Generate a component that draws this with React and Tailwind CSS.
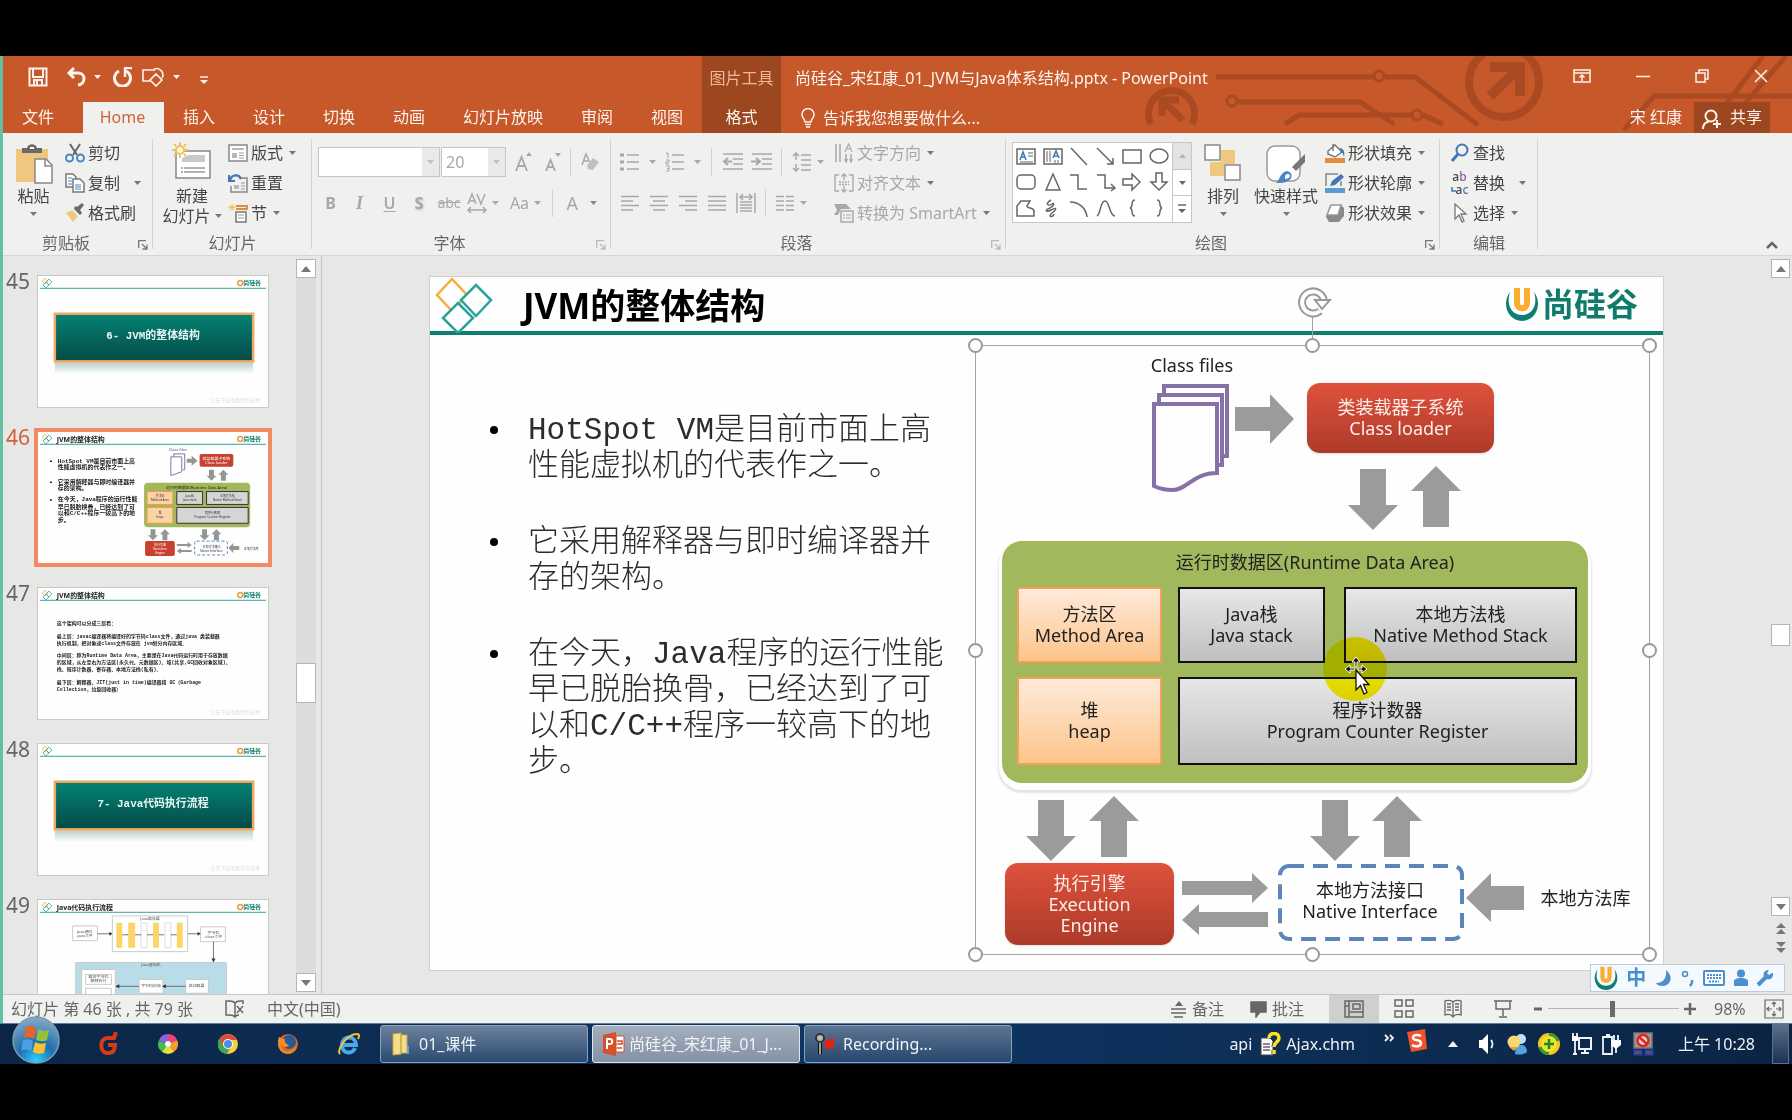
import React from "react";

const UI = "font-['Noto_Sans','Noto_Sans_CJK_SC',sans-serif]";

function Svg({ w = 20, h = 20, vb, className = "", children }) {
  return (
    <svg
      width={w}
      height={h}
      viewBox={vb || `0 0 ${w} ${h}`}
      fill="none"
      stroke="currentColor"
      strokeWidth="1.5"
      aria-hidden="true"
      className={"shrink-0 " + className}
    >
      {children}
    </svg>
  );
}

const Caret = ({ className = "" }) => (
  <Svg w={7} h={4} className={className}>
    <path d="M0 0h7L3.500 4z" fill="currentColor" stroke="none" />
  </Svg>
);

const Sep = ({ className = "" }) => <span className={"h-7 w-px shrink-0 bg-[#d2d3d1] " + className} />;

const Launcher = ({ className = "" }) => (
  <button type="button" aria-label="更多选项" className={"absolute right-[5px] bottom-[5px] " + className}>
    <Svg w={10} h={10}>
      <path d="M.7 8V.7H8M4 4l5 5M9 4.500v4.500H4.500" strokeWidth="1.300" />
    </Svg>
  </button>
);

/* ---------- brand drawings ---------- */

const ULogo = ({ w, h }) => (
  <Svg w={w} h={h} vb="0 0 34 34">
    <path d="M5 5C-4 17 3 34 17 34S38 17 29 5C33 17 28 28 17 28S1 17 5 5z" fill="#0e7f70" stroke="none" />
    <path d="M12 1v15c0 7 10 7 10 0V1" stroke="#fbae2f" strokeWidth="6" />
  </Svg>
);

const Diamonds = () => (
  <Svg w={58} h={56} className="self-start">
    <g strokeWidth="2.500">
      <path d="M17 2l15 16-15 16L2 18z" stroke="#f5ae3c" />
      <path d="M41 8l15 15-15 16-15-16z" stroke="#2aa39a" fill="#fefefe" />
      <path d="M23 26l15 15-15 15L8 41z" stroke="#2aa39a" fill="#fefefe" />
    </g>
  </Svg>
);

/* ---------- header ---------- */

function Circuit() {
  return (
    <svg
      className="pointer-events-none absolute right-0 top-0 h-[77px] w-[656px]"
      viewBox="1136 56 656 77"
      fill="none"
      stroke="#a94a22"
      strokeWidth="5"
      aria-hidden="true"
    >
      <path d="M1151 124a23 23 0 1 1 41 0" strokeWidth="7" />
      <path d="M1183 120l-18-17M1162 116v-16h17" strokeWidth="7" />
      <path d="M1216 77h157M1385 77h30l63 48" />
      <circle cx="1379" cy="76" r="5" strokeWidth="3" />
      <circle cx="1232" cy="101" r="5" strokeWidth="3" />
      <path d="M1238 102h122l34 22" />
      <path d="M1285 124l14-9h112M1423 115l20 9" />
      <circle cx="1417" cy="115" r="5" strokeWidth="3" />
      <circle cx="1504" cy="82" r="35" strokeWidth="8" />
      <path d="M1490 96l28-27M1490 67h30v29" strokeWidth="10" />
      <path d="M1624 130l30-34h138M1727 103l36-47M1742 107l44-51" />
    </svg>
  );
}

function QuickAccess() {
  return (
    <div className="flex h-[46px] items-center pb-1 pl-[25px] text-[#fdf3ee]">
      <button type="button" aria-label="保存">
        <Svg w={20} h={20}>
          <path d="M1.500 1.500h17v17h-17zM5 2v8h10V2M6 18v-5h8v5M9 14v4" strokeWidth="2" />
        </Svg>
      </button>
      <button type="button" aria-label="撤消" className="ml-[18px] flex items-center gap-[8px]">
        <Svg w={20} h={20}>
          <path d="M8 1L3 6l5 5M3 6h9c8 0 8 11 0 12" strokeWidth="3" />
        </Svg>
        <Caret />
      </button>
      <button type="button" aria-label="重复" className="ml-[12px]">
        <Svg w={20} h={20}>
          <path d="M6 4a8 8 0 1 0 7 0" strokeWidth="3" />
          <path d="M11 1h8M12 1v9" strokeWidth="2.500" />
        </Svg>
      </button>
      <button type="button" aria-label="形状" className="ml-[9px] flex items-center gap-[7px]">
        <Svg w={24} h={20}>
          <path d="M9 14H1V3h12M12 2c6-2 11 4 8 9M14 7l6 6-6 6-6-6z" strokeWidth="1.600" />
        </Svg>
        <Caret />
      </button>
      <button type="button" aria-label="自定义快速访问工具栏" className="ml-[20px] mt-1.5">
        <Svg w={8} h={9}>
          <path d="M0 1h8" />
          <path d="M0 4h8L4 8z" fill="currentColor" stroke="none" />
        </Svg>
      </button>
    </div>
  );
}

const TABS = ["插入", "设计", "切换", "动画", "幻灯片放映", "审阅", "视图"];

function Header() {
  return (
    <header className="relative flex h-[77px] shrink-0 bg-[#c75829] text-base leading-5 text-[#fdf3ee]">
      <Circuit />
      <div className="relative flex flex-col">
        <QuickAccess />
        <nav className="flex h-[31px]">
          <button type="button" className="w-20 pb-0.5 pr-2.5">文件</button>
          <button type="button" className="w-[81px] bg-[#f0f1ef] pb-0.5 pr-0.5 text-[#d0603a]">Home</button>
          {TABS.map((t) => (
            <button type="button" key={t} className="px-[19px] pb-0.5">{t}</button>
          ))}
        </nav>
      </div>
      <div className="relative flex w-[79px] flex-col bg-[#9c471f]">
        <div className="flex h-[46px] items-center justify-center pb-0.5 text-[#f2b798]">图片工具</div>
        <button type="button" className="h-[31px] pb-0.5">格式</button>
      </div>
      <div className="relative flex flex-1 flex-col pl-3.5">
        <div className="flex h-[46px] items-center pb-0.5">
          <h1 className="flex-1 whitespace-nowrap">尚硅谷_宋红康_01_JVM与Java体系结构.pptx - PowerPoint</h1>
          <div className="flex gap-[41px] pb-1 pr-6">
            <button type="button" aria-label="功能区显示选项">
              <Svg w={18} h={14}><path d="M1 1h16v12H1zM1 4h16M9 12V6M6.500 8.500L9 6l2.500 2.500" /></Svg>
            </button>
            <button type="button" aria-label="最小化" className="ml-1">
              <Svg w={14} h={14}><path d="M0 7.500h14" /></Svg>
            </button>
            <button type="button" aria-label="还原" className="ml-1">
              <Svg w={14} h={14}><path d="M1 4h9v9H1zM4 4V1h9v9h-3" /></Svg>
            </button>
            <button type="button" aria-label="关闭" className="ml-1">
              <Svg w={14} h={14}><path d="M1 1l12 12M13 1L1 13" /></Svg>
            </button>
          </div>
        </div>
        <div className="flex h-[31px] items-center">
          <button type="button" className="flex flex-1 items-center gap-2 pl-1.5">
            <Svg w={14} h={20}>
              <path d="M4 14c0-3-3-4-3-7.500a6 6 0 0 1 12 0C13 10 10 11 10 14zM4 16.500h6M5 19h4" />
            </Svg>
            告诉我您想要做什么...
          </button>
          <span className="mr-3 pb-0.5">宋 红康</span>
          <button type="button" className="mr-[22px] flex h-full items-center gap-2 bg-[#9c471f] px-2 pb-0.5">
            <Svg w={20} h={20} className="mt-1">
              <circle cx="9" cy="7" r="5.500" strokeWidth="2" />
              <path d="M1 20c0-5 3-7 6-7.500M15 11v8M11 15h8" strokeWidth="2" />
            </Svg>
            共享
          </button>
        </div>
      </div>
    </header>
  );
}

/* ---------- ribbon ---------- */

function Group({ label, width, labelPad = "pr-6", launcher, dim, children }) {
  return (
    <section className={"relative flex shrink-0 flex-col pt-[5px] " + width}>
      <span className="absolute bottom-1.5 right-0 top-1.5 w-px bg-[#d2d3d1]" />
      <div className="flex h-[90px]">{children}</div>
      <div className={"flex flex-1 items-center justify-center pt-0.5 text-[#666] " + labelPad}>{label}</div>
      {launcher && <Launcher className={dim ? "text-[#b9bab8]" : "text-[#777]"} />}
    </section>
  );
}

const Row = ({ icon, children, caret, gap = "" }) => (
  <button type="button" className="flex h-[30px] items-center gap-[3px] whitespace-nowrap">
    <span className="flex w-[21px] justify-center">{icon}</span>
    {children}
    {caret && <Caret className={"ml-[3px] text-[#777] " + gap} />}
  </button>
);

const ic = {
  cut: (
    <Svg><path d="M5 1l7 11M15 1L8 12" stroke="#666" strokeWidth="2" /><circle cx="4.500" cy="15" r="3.500" stroke="#4a86c5" strokeWidth="2" /><circle cx="15.500" cy="15" r="3.500" stroke="#4a86c5" strokeWidth="2" /></Svg>
  ),
  copy: (
    <Svg><g stroke="#777"><path d="M1 1h7l3 3v10H1z" fill="#fff" /><path d="M8 6h7l4 4v9H8z" fill="#fff" /></g><path d="M3 5h4M3 8h4M3 11h4M10 12h6M10 14h6M10 16h6" stroke="#4a86c5" strokeWidth="1" /></Svg>
  ),
  brush: (
    <Svg><path d="M1 10l6-3 6 6-5 6z" fill="#f0c77e" stroke="none" /><path d="M9 6l6 6 2-2-2-3 4-5-2-2-5 4-2-1z" fill="#6a6a6a" stroke="none" /></Svg>
  ),
  layout: (
    <Svg><path d="M1 2h18v16H1z" stroke="#888" fill="#fff" /><path d="M4 5h12v2H4zM4 10h5v5H4z" fill="#b9bab8" stroke="none" /><path d="M11 10h5M11 12.500h5M11 15h5" stroke="#999" strokeWidth="1" /></Svg>
  ),
  reset: (
    <Svg><path d="M11 5h8v14H3v-6" stroke="#888" /><path d="M6 12h5v4H6z" fill="#b9bab8" stroke="none" /><path d="M13 10h4M13 13h4M13 16h4" stroke="#999" strokeWidth="1" /><path d="M1 2v6h6M2 7c2-6 9-6 11-1" stroke="#3f77b8" strokeWidth="2.200" /></Svg>
  ),
  section: (
    <Svg><path d="M8 3h11v3H8" stroke="#e08a3c" strokeWidth="1.800" /><path d="M8 9h10v10H8z" stroke="#777" fill="#fff" /><path d="M10 12h6M10 15h6" stroke="#999" strokeWidth="1" /><path d="M4 1v7M.5 4.500h7M1.500 2l5 5M6.500 2l-5 5" stroke="#f0c060" strokeWidth="1" /></Svg>
  ),
  textDir: <Svg><path d="M2 1v18M6 1v18M12 11v8M17 11v8" /><path d="M11 9l3.500-8L18 9M12.500 6h4M10.500 16l1.500 3 1.500-3M15.500 16l1.500 3 1.500-3" strokeWidth="1.200" /></Svg>,
  alignText: <Svg><path d="M5 2H1v16h4M15 2h4v16h-4M10 1v6M10 19v-6M7.500 3.500L10 1l2.500 2.500M7.500 16.500L10 19l2.500-2.500" strokeWidth="1.300" /><path d="M5 9h10M5 11.500h10" strokeDasharray="2 1" /></Svg>,
  smart: <Svg><path d="M0 1h12l5 5H7l-3 6H0l3-5z" fill="currentColor" stroke="none" /><path d="M7 8h12v11H7z" fill="#f0f1ef" /><path d="M9 12h2M12 12h5M9 15h2M12 15h5" strokeWidth="1.200" /></Svg>,
  fill: (
    <Svg><path d="M3 8l7-6 7 7-7 5-7-3z" fill="#fff" stroke="#777" /><path d="M8 8V1" stroke="#777" /><path d="M15 5c4 1 5 4 4 9-1-4-2-5-4-6z" fill="#3f77b8" stroke="none" /><path d="M0 15h20v5H0z" fill="#ea8b3b" stroke="none" /></Svg>
  ),
  outline: (
    <Svg><path d="M13 1H1v12M16 8v5" stroke="#888" /><path d="M5 13l2-5 9-7 3 3-9 8z" fill="#3f77b8" stroke="none" /><path d="M0 15h20v5H0z" fill="#5b9bd5" stroke="none" /></Svg>
  ),
  effect: (
    <Svg><path d="M5 2h11l3 3v8l-5 6H4l-3-5z" fill="#8a8a8a" stroke="none" /><path d="M6 2h10l-3 10H2z" fill="#fff" stroke="#999" /></Svg>
  ),
  find: <Svg><circle cx="12" cy="7" r="5.500" stroke="#3f77b8" strokeWidth="2" /><path d="M8 11l-6 7" stroke="#3f77b8" strokeWidth="3" /></Svg>,
  select: <Svg><path d="M5 1v15l4-4 3 7 2-1-3-7h5z" fill="#fff" stroke="#777" strokeWidth="1.300" /></Svg>,
};

const Replace = () => (
  <span className="flex flex-col text-xs font-medium leading-[13px]">
    <span>a<span className="text-[#8d56ad]">b</span></span>
    <span className="flex items-center"><Svg w={5} h={6}><path d="M1 0v4h4" stroke="#3f77b8" /></Svg>a<span className="text-[#3f77b8]">c</span></span>
  </span>
);

const lines = (rows) => (
  <Svg>
    {rows.map(([a, b], i) => (
      <path key={i} d={`M${a} ${3.5 + i * 4.5}H${b}`} />
    ))}
  </Svg>
);

const SHAPES = [
  <g key="0"><path d="M1 3h18v15H1z" /><path d="M4 14L7 6l3 8M5 11h4" stroke="#3f77b8" /><path d="M12 7h5M12 10h5M4 16h13" strokeWidth="1" /></g>,
  <g key="1"><path d="M1 3h18v15H1z" /><path d="M10 12l3-7 3 7M11 10h4" stroke="#3f77b8" /><path d="M4 5v11M7 5v11M12 14v3M15 14v3" strokeWidth="1" /></g>,
  <path key="2" d="M2 2l16 17" />,
  <path key="3" d="M1 2l16 16M17 12v6h-6" />,
  <path key="4" d="M1 4h18v13H1z" />,
  <ellipse key="5" cx="10" cy="10" rx="9" ry="7" />,
  <rect key="6" x="1" y="3" width="18" height="14" rx="4" />,
  <path key="7" d="M10 2l7 16H3z" />,
  <path key="8" d="M1 3h8v14h9" />,
  <path key="9" d="M1 3h8v13h9M15 12l4 4-4 3" />,
  <path key="10" d="M1 7h9V2l8 8-8 8v-5H1z" />,
  <path key="11" d="M7 1h6v9h5l-8 8-8-8h5z" />,
  <path key="12" d="M1 17V7l4-5h9l-3 5c0 3 7 1 7 5v5z" />,
  <path key="13" d="M8 1C0 6 7 7 9 5s3 2-2 4-5 5 1 2 6-1 1 3 1 5 2 1" />,
  <path key="14" d="M1 3c9 0 16 6 17 15" />,
  <path key="15" d="M1 17C5 15 4 2 9 2s4 15 10 15" />,
  <path key="16" d="M13 1c-5 0-1 7-5 8 4 1 0 8 5 8" />,
  <path key="17" d="M8 1c5 0 1 7 5 8-4 1 0 8-5 8" />,
];

function Ribbon() {
  return (
    <div className="flex h-[123px] shrink-0 border-b border-[#d6d7d5] bg-[#f0f1ef] text-base leading-5 text-[#444]">
      <Group label="剪贴板" width="w-[150px]" launcher>
        <button type="button" className="flex w-[61px] flex-col items-center pt-1.5">
          <Svg w={38} h={40}>
            <path d="M1 5h32v33H1z" fill="#f0c77e" stroke="none" />
            <path d="M7 9V4h5c1-5 9-5 10 0h5v5z" fill="#6a6a6a" stroke="none" />
            <path d="M15 3h4v2h-4z" fill="#fff" stroke="none" />
            <path d="M20 15h11l6 6v18H20z" fill="#fff" stroke="#888" />
            <path d="M30 15v7h7" stroke="#888" />
          </Svg>
          <span className="mt-0.5">粘贴</span>
          <Caret className="mt-1.5 text-[#777]" />
        </button>
        <div className="flex flex-col">
          <Row icon={ic.cut}>剪切</Row>
          <Row icon={ic.copy} caret gap="pl-2 w-[15px]">复制</Row>
          <Row icon={ic.brush}>格式刷</Row>
        </div>
      </Group>

      <Group label="幻灯片" width="w-[159px]" labelPad="pr-0">
        <button type="button" className="flex w-[74px] flex-col items-center pl-1 pt-1">
          <Svg w={40} h={38}>
            <path d="M4 9h34v27H4z" fill="#fff" stroke="#888" />
            <path d="M17 13h16v7H10v-4z" fill="#c9cac8" stroke="none" />
            <path d="M9 26h24M9 30h24" stroke="#999" strokeDasharray="2 1 30 0" />
            <circle cx="8" cy="8" r="4" fill="#fff3d0" stroke="#f0c060" strokeWidth="2" />
            <path d="M8 0v3M8 13v3M0 8h3M13 8h3M2 2l2 2M12 12l2 2M2 14l2-2M12 4l2-2" stroke="#f0c060" strokeWidth="1.800" />
          </Svg>
          <span className="mt-1.5">新建</span>
          <span className="flex items-center gap-1 whitespace-nowrap">幻灯片<Caret className="text-[#777]" /></span>
        </button>
        <div className="flex flex-col">
          <Row icon={ic.layout} caret>版式</Row>
          <Row icon={ic.reset}>重置</Row>
          <Row icon={ic.section} caret>节</Row>
        </div>
      </Group>

      <Group label="字体" width="w-[299px]" launcher dim>
        <div className="flex flex-col gap-[9px] pl-1.5 pt-2 text-[#a8a9a7]">
          <div className="flex h-8 items-center">
            <label className="flex h-[30px] w-[122px] border border-[#c6c7c5] bg-white">
              <input aria-label="字体" className="w-0 flex-1 px-1 outline-none" />
              <span className="flex w-[17px] items-center justify-center bg-[#e9eae8]"><Caret className="text-[#c0c1bf]" /></span>
            </label>
            <label className="ml-px flex h-[30px] w-[65px] border border-[#c6c7c5] bg-white">
              <input aria-label="字号" defaultValue="20" className="w-0 flex-1 pl-1 outline-none" />
              <span className="flex w-[17px] items-center justify-center bg-[#e9eae8]"><Caret className="text-[#c0c1bf]" /></span>
            </label>
            <button type="button" aria-label="增大字号" className="ml-1 flex w-[27px] justify-center">
              <Svg w={18} h={20}><path d="M1 19L6.500 5 12 19M3 14h7" strokeWidth="1.800" /><path d="M11 4h6l-3-4z" fill="currentColor" stroke="none" /></Svg>
            </button>
            <button type="button" aria-label="减小字号" className="flex w-[31px] justify-center">
              <Svg w={18} h={20}><path d="M2 19L6.500 8 11 19M4 15h5" strokeWidth="1.800" /><path d="M11 1h6l-3 4z" fill="currentColor" stroke="none" /></Svg>
            </button>
            <Sep className="mx-0.5" />
            <button type="button" aria-label="清除格式" className="flex w-[34px] justify-center">
              <Svg><path d="M2 13L6 2l4 9M3 9h5" /><path d="M7 13l6-7 6 4-6 8-5-1z" fill="#c0c1bf" stroke="none" /></Svg>
            </button>
          </div>
          <div className="flex h-8 items-center">
            <button type="button" className="w-[25px] font-bold">B</button>
            <button type="button" className="w-[33px] font-['Liberation_Serif',serif] text-lg font-bold italic">I</button>
            <button type="button" className="w-[27px] font-semibold underline underline-offset-2">U</button>
            <button type="button" className="w-[32px] font-bold [text-shadow:1px_1px_2px_#bbb]">S</button>
            <button type="button" className="w-[28px] text-sm line-through">abc</button>
            <button type="button" aria-label="字符间距" className="flex w-[40px] items-center justify-center gap-[5px]">
              <Svg w={20} h={22}><path d="M1 12L5 2l4 10M2.500 9h5M10 2l4 10 4-10M1 18h18M4 15l-3 3 3 3M16 15l3 3-3 3" /></Svg><Caret />
            </button>
            <button type="button" className="flex w-[45px] items-center justify-center gap-[5px]">Aa<Caret /></button>
            <Sep className="mx-1" />
            <button type="button" className="flex w-[40px] items-center justify-end gap-3 text-lg"><span>A</span><Caret className="text-[#888]" /></button>
          </div>
        </div>
      </Group>

      <Group label="段落" width="w-[395px]" launcher dim>
        <div className="flex w-[222px] shrink-0 flex-col gap-[9px] pl-[9px] pt-2 text-[#a8a9a7]">
          <div className="flex h-8 items-center">
            <button type="button" aria-label="项目符号" className="flex items-center gap-[9px]">
              <Svg><path d="M0 3h4M0 10h4M0 17h4" strokeWidth="3" /><path d="M7 3h12M7 10h12M7 17h12" /></Svg><Caret />
            </button>
            <button type="button" aria-label="编号" className="ml-[9px] flex items-center gap-[9px]">
              <Svg><path d="M1 1h2v5M1 8h3v2H1v2h3M1 14h3v5H1M2 16.500h2" strokeWidth="1" /><path d="M7 3h12M7 10h12M7 17h12" /></Svg><Caret />
            </button>
            <Sep className="mx-[10px]" />
            <button type="button" aria-label="减少缩进"><Svg w={22}><path d="M1 2h20M11 7h10M11 12h10M1 17h20" /><path d="M10 9.500H2M6 6L2 9.500 6 13" strokeWidth="2" /></Svg></button>
            <button type="button" aria-label="增加缩进" className="ml-[7px]"><Svg w={22}><path d="M1 2h20M11 7h10M11 12h10M1 17h20" /><path d="M0 9.500h8M5 6l4 3.500L5 13" strokeWidth="2" /></Svg></button>
            <Sep className="ml-2 mr-[10px]" />
            <button type="button" aria-label="行距" className="flex items-center gap-[5px]">
              <Svg><path d="M4 8V1M1 4l3-3 3 3M4 12v7M1 16l3 3 3-3M9 3h10M9 8h10M9 13h10M9 18h10" /></Svg><Caret />
            </button>
          </div>
          <div className="flex h-8 items-center gap-[9px]">
            <button type="button" aria-label="左对齐">{lines([[1, 19], [1, 13], [1, 19], [1, 13]])}</button>
            <button type="button" aria-label="居中">{lines([[1, 19], [4, 16], [1, 19], [4, 16]])}</button>
            <button type="button" aria-label="右对齐">{lines([[1, 19], [7, 19], [1, 19], [7, 19]])}</button>
            <button type="button" aria-label="两端对齐">{lines([[1, 19], [1, 19], [1, 19], [1, 19]])}</button>
            <button type="button" aria-label="分散对齐"><Svg><path d="M1 0v20M19 0v20M4 4h12M7 1L4 4l3 3M13 1l3 3-3 3M4 9h12M4 12h12M4 15h12M4 18h12" /></Svg></button>
            <Sep />
            <button type="button" aria-label="分栏" className="flex items-center gap-[5px]">
              <Svg><path d="M1 3.500h8M11 3.500h8M1 8h8M11 8h8M1 12.500h8M11 12.500h8M1 17h8M11 17h8" /></Svg><Caret />
            </button>
          </div>
        </div>
        <div className="flex flex-col text-[#a8a9a7]">
          <Row icon={ic.textDir} caret>文字方向</Row>
          <Row icon={ic.alignText} caret>对齐文本</Row>
          <Row icon={ic.smart} caret>转换为 SmartArt</Row>
        </div>
      </Group>

      <Group label="绘图" width="w-[434px]" launcher>
        <div className="ml-1.5 mt-1 flex h-[81px] w-[180px] border border-[#c6c7c5] bg-white">
          <div className="grid flex-1 grid-cols-6 grid-rows-3 place-items-center text-[#666]">
            {SHAPES.map((s, i) => (
              <button type="button" aria-label={`形状 ${i + 1}`} key={i}><Svg>{s}</Svg></button>
            ))}
          </div>
          <div className="flex w-[19px] flex-col divide-y divide-[#c6c7c5] border-l border-[#c6c7c5] text-[#666]">
            <button type="button" aria-label="上一行" className="flex flex-1 items-center justify-center bg-[#e3e4e2] text-[#b5b6b4]"><Caret className="rotate-180" /></button>
            <button type="button" aria-label="下一行" className="flex flex-1 items-center justify-center"><Caret /></button>
            <button type="button" aria-label="更多形状" className="flex flex-1 items-center justify-center"><Svg w={8} h={10}><path d="M0 1h8" /><path d="M0 5h8L4 9z" fill="currentColor" stroke="none" /></Svg></button>
          </div>
        </div>
        <button type="button" className="ml-[5px] flex w-[52px] flex-col items-center pt-1.5">
          <Svg w={38} h={38}>
            <path d="M17 6h14v14H17zM6 18h14v14H6z" fill="#f0c77e" stroke="none" />
            <path d="M1 1h15v15H1zM21 21h15v15H21z" fill="#fff" stroke="#888" />
          </Svg>
          <span className="mt-1">排列</span>
          <Caret className="mt-1.5 text-[#777]" />
        </button>
        <button type="button" className="ml-[3px] flex w-[68px] flex-col items-center pt-1.5">
          <Svg w={40} h={40}>
            <rect x="1" y="2" width="33" height="35" rx="8" fill="#fff" stroke="#999" />
            <path d="M39 10v8l-9 9-4-4z" fill="#777" stroke="none" />
            <path d="M10 39c4-3 4-11 11-12 6 1 6 8 1 10-3 2-8 2-12 2z" fill="#4a86c5" stroke="none" />
            <path d="M19 32c2-3 5-2 5 0s-3 3-5 3z" fill="#fff" stroke="none" />
          </Svg>
          <span className="mt-0.5 whitespace-nowrap">快速样式</span>
          <Caret className="mt-1.5 text-[#777]" />
        </button>
        <div className="ml-1 flex flex-col">
          <Row icon={ic.fill} caret>形状填充</Row>
          <Row icon={ic.outline} caret>形状轮廓</Row>
          <Row icon={ic.effect} caret>形状效果</Row>
        </div>
      </Group>

      <Group label="编辑" width="w-[98px]" labelPad="pr-0">
        <div className="flex flex-col pl-[9px]">
          <Row icon={ic.find}>查找</Row>
          <Row icon={<Replace />} caret gap="pl-2 w-[15px]">替换</Row>
          <Row icon={ic.select} caret>选择</Row>
        </div>
      </Group>

      <div className="flex flex-1 items-end justify-end pb-1.5 pr-3.5 text-[#666]">
        <button type="button" aria-label="折叠功能区"><Svg w={12} h={8}><path d="M1 7l5-5 5 5" strokeWidth="2.500" /></Svg></button>
      </div>
    </div>
  );
}

/* ---------- thumbnails ---------- */

function MiniBrand({ title }) {
  return (
    <g textAnchor="start">
      <g fill="none" strokeWidth=".8">
        <path d="M7 2l3 3-3 3-3-3z" stroke="#f5ae3c" />
        <path d="M11 3l3 3-3 3-3-3zM8 6l3 3-3 3-3-3z" stroke="#2aa39a" />
      </g>
      <path d="M2 12.500h228" stroke="#5fb5aa" strokeWidth="1.200" />
      <circle cx="204" cy="7" r="2.500" fill="none" stroke="#e6a23a" strokeWidth="1.500" />
      <text x="207" y="9" fontSize="6" fontWeight="700" fill="#0e7f70">尚硅谷</text>
      {title && <text x="19" y="10" fontSize="7" fontWeight="700" fill="#222">{title}</text>}
    </g>
  );
}

function Banner({ text }) {
  return (
    <g>
      <MiniBrand />
      <defs>
        <linearGradient id="teal" x1="0" y1="0" x2="0" y2="1"><stop offset="0" stopColor="#048374" /><stop offset="1" stopColor="#044a47" /></linearGradient>
        <linearGradient id="fade" x1="0" y1="0" x2="0" y2="1"><stop offset="0" stopColor="#b9cfcd" /><stop offset="1" stopColor="#fefefe" /></linearGradient>
      </defs>
      <rect x="17" y="87" width="200" height="12" fill="url(#fade)" />
      <rect x="17" y="38" width="200" height="48" fill="url(#teal)" stroke="#f2a65e" strokeWidth="2.500" />
      <text x="116" y="63" textAnchor="middle" fontSize="11" fontWeight="700" fill="#e8f6f3" fontFamily="Liberation Mono, Noto Sans CJK SC, monospace">{text}</text>
      <text x="224" y="127" textAnchor="end" fontSize="5" fill="#dcdcdc">让天下没有难学的技术</text>
    </g>
  );
}

const miniLines = (list, x, size) =>
  list.map(([y, t]) => (
    <text key={y} x={x} y={y} fontSize={size} fontWeight="700" fill="#1a1a1a" fontFamily="Liberation Mono, Noto Sans CJK SC, monospace">{t}</text>
  ));

function MiniDiagram() {
  const up = (x, y) => <path key={`${x}u`} d={`M${x} ${y}l5 5h-2.500v6h-5v-6H${x - 5}z`} fill="#949694" />;
  const down = (x, y) => <path key={`${x}d`} d={`M${x} ${y + 11}l5-5h-2.500v-6h-5v6H${x - 5}z`} fill="#949694" />;
  return (
    <g textAnchor="middle" fontSize="3">
      <MiniBrand title="JVM的整体结构" />
      <g textAnchor="start">
        {miniLines([[31, "HotSpot VM是目前市面上高"], [37, "性能虚拟机的代表作之一。"], [52, "它采用解释器与即时编译器并"], [58, "存的架构。"], [70, "在今天，Java程序的运行性能"], [78, "早已脱胎换骨，已经达到了可"], [84, "以和C/C++程序一较高下的地"], [91, "步。"]], 20, 6)}
        <path d="M12 29.500h2M12 50.500h2M12 68.500h2" stroke="#222" strokeWidth="1.500" />
      </g>
      <text x="141" y="19" fontSize="4" fill="#555">Class files</text>
      <path d="M137 25V22h11v16h-2M134 25h11v15l-11 4z" fill="#fff" stroke="#8571a8" />
      <path d="M150 27h5v-3l6 5-6 5v-3h-5z" fill="#949694" />
      <rect x="163" y="22" width="34" height="13" rx="2" fill="#c8412f" />
      <text x="180" y="28" fontSize="4" fill="#fff">类装载器子系统</text><text x="180" y="32" fontSize="4" fill="#fff">Class loader</text>
      {down(175, 38)}{up(187, 38)}
      <rect x="107" y="51" width="107" height="45" rx="4" fill="#a2b85c" />
      <text x="160" y="57" fontSize="4" fill="#222">运行时数据区(Runtime Data Area)</text>
      <path d="M110 60h26v13h-26zM110 76h26v16h-26z" fill="#fcd3a5" stroke="#ef9a4a" />
      <path d="M140 60h26v13h-26zM170 60h42v13h-42zM140 76h72v16h-72z" fill="#d4d5d4" stroke="#333" />
      <g fill="#333">
        <text x="123" y="66">方法区</text><text x="123" y="70">Method Area</text>
        <text x="153" y="66">Java栈</text><text x="153" y="70">Java stack</text>
        <text x="191" y="66">本地方法栈</text><text x="191" y="70">Native Method Stack</text>
        <text x="123" y="83">堆</text><text x="123" y="87">heap</text>
        <text x="176" y="83">程序计数器</text><text x="176" y="87">Program Counter Register</text>
        <text x="175" y="117">本地方法接口</text><text x="175" y="121">Native Interface</text><text x="215" y="119">本地方法库</text>
      </g>
      {down(116, 98)}{up(128, 98)}{down(168, 98)}{up(180, 98)}
      <rect x="108" y="110" width="30" height="15" rx="2" fill="#c8412f" />
      <text x="123" y="115" fill="#fff">执行引擎</text><text x="123" y="119" fill="#fff">Execution</text><text x="123" y="123" fill="#fff">Engine</text>
      <path d="M140 113h11v-2l4 3-4 3v-2h-11zM155 119h-11v-2l-4 3 4 3v-2h11zM203 115h-6v-3l-5 5 5 5v-3h6z" fill="#949694" />
      <rect x="158" y="110" width="33" height="14" rx="2" fill="none" stroke="#5b86b8" strokeDasharray="3 2" />
    </g>
  );
}

function MiniFlow() {
  return (
    <g textAnchor="middle" fontSize="4" fill="#555">
      <MiniBrand title="Java代码执行流程" />
      <g fill="#fff" stroke="#c9c9c9">
        <path d="M35 26h25v15H35zM75 16h76v36H75zM164 27h25v15h-25z" />
        <path d="M38 63h152v70H38z" fill="#b9dde8" />
        <path d="M44 70h34v60H44zM102 80h24v14h-24zM149 80h23v14h-23z" />
        <path d="M48 75h26v10H48zM48 89h26v10H48z" />
      </g>
      <path d="M79 23h6v25h-6zM91 23h7v25h-7zM116 23h6v25h-6zM140 23h6v25h-6z" fill="#fbd567" />
      <path d="M104 23h6v25h-6zM128 23h6v25h-6z" fill="#fff" stroke="#ddd" />
      <path d="M60 34h14M85 35h6M98 35h6M110 35h6M122 35h5M134 35h6M151 34h12M177 42v19M149 87h-22M102 87H80" fill="none" stroke="#555" strokeWidth=".8" />
      <path d="M175 59h4l-2 4zM129 85v4l-4-2zM82 85v4l-4-2zM72 32v4l3-2zM161 32v4l3-2z" fill="#333" />
      <text x="113" y="20">Java编译器</text><text x="47" y="33">Java源码</text><text x="47" y="37">.java文件</text>
      <text x="177" y="34">字节码</text><text x="177" y="38">.class文件</text><text x="114" y="67">Java虚拟机</text>
      <text x="61" y="79">翻译字节码</text><text x="61" y="83">解释执行</text><text x="114" y="88">字节码校验</text><text x="160" y="88">类加载器</text>
    </g>
  );
}

const THUMBS = [
  { n: 45, art: <Banner text="6- JVM的整体结构" /> },
  { n: 46, art: <MiniDiagram />, on: true },
  {
    n: 47,
    art: (
      <g>
        <MiniBrand title="JVM的整体结构" />
        {miniLines([[37, "这个架构可以分成三层看："], [50, "最上层：javac编译器将编译好的字节码class文件，通过java 类装载器"], [57, "执行机制，把对象或class文件存放在 jvm划分内存区域。"], [70, "中间层：称为Runtime Data Area，主要是在Java代码运行时用于存放数据"], [77, "的区域，从左至右为方法区(永久代、元数据区)、堆(共享,GC回收对象区域)、"], [84, "栈、程序计数器、寄存器、本地方法栈(私有)。"], [97, "最下层：解释器、JIT(just in time)编译器和 GC（Garbage"], [104, "Collection，垃圾回收器）"]], 19, 5)}
        <text x="224" y="127" textAnchor="end" fontSize="5" fill="#dcdcdc">让天下没有难学的技术</text>
      </g>
    ),
  },
  { n: 48, art: <Banner text="7- Java代码执行流程" /> },
  { n: 49, art: <MiniFlow /> },
];

const ScrollBtn = ({ label, up }) => (
  <button type="button" aria-label={label} className="flex h-[19px] shrink-0 items-center justify-center border border-[#b5b6b4] bg-white text-[#777]">
    <Svg w={10} h={6} className={up ? "" : "rotate-180"}><path d="M0 6h10L5 0z" fill="currentColor" stroke="none" /></Svg>
  </button>
);

function Thumbnails() {
  return (
    <aside className="flex w-[319px] shrink-0 border-r border-[#c6c7c5]">
      <ol className="flex flex-1 flex-col gap-[25px] overflow-hidden pt-5">
        {THUMBS.map(({ n, art, on }) => (
          <li key={n} className="flex h-[131px] shrink-0">
            <span className={"-mt-[9px] w-[35px] pl-[3px] text-[21px] leading-7 " + (on ? "text-[#d0603a]" : "text-[#666]")}>{n}</span>
            <button
              type="button"
              aria-label={`幻灯片 ${n}`}
              className={"h-[131px] w-[230px] bg-[#fefefe] outline-solid " + (on ? "outline-4 outline-[#f28b63]" : "outline-1 outline-[#c9cac8]")}
            >
              <svg viewBox="0 0 232 132" width="230" height="131" className="block">{art}</svg>
            </button>
          </li>
        ))}
      </ol>
      <div className="mb-0.5 mr-[5px] mt-[3px] flex w-5 flex-col bg-[#dcdddb]">
        <ScrollBtn label="向上滚动" up />
        <div className="grow-[385]" />
        <div className="h-10 border border-[#b5b6b4] bg-white" />
        <div className="grow-[270]" />
        <ScrollBtn label="向下滚动" />
      </div>
    </aside>
  );
}

/* ---------- slide ---------- */

const NODE = "absolute flex flex-col items-center justify-center text-center text-[18px] leading-[21px] whitespace-nowrap ";
const RED = "rounded-[13px] bg-linear-to-b from-[#df513c] to-[#ad3b2a] text-[#fdeee9] shadow ";
const PEACH = "border-2 border-[#f2a055] bg-linear-to-b from-[#feeada] to-[#fdc48a] ";
const GRAY = "border-2 border-[#111] bg-linear-to-b from-[#e6e7e6] to-[#bfc0bf] ";

function Handle({ pos }) {
  return <span className={"absolute size-[15px] rounded-full border-2 border-[#9a9a9a] bg-white " + pos} />;
}

function Arrows() {
  const down = (x, y) => `M${x} ${y + 61}l-25-25h12v-36h26v36h12z`;
  const up = (x, y) => `M${x} ${y}l25 25h-12v36h-26v-36h-12z`;
  return (
    <svg className="absolute inset-0" width="675" height="610" viewBox="976 345 675 610" fill="#9a9c99" aria-hidden="true">
      <g fill="#fefefe" stroke="#8571a8" strokeWidth="4">
        <path d="M1164 402V385h63v70h-8" />
        <path d="M1159 404V394h63v70h-6" />
        <path d="M1154 403h63v69c-24 0-30 17-44 17-7 0-13-1-19-4z" />
      </g>
      <path d="M1235 406h35v-13l24 25-24 25v-13h-35z" />
      <path d={down(1373, 468)} />
      <path d={up(1436, 465)} />
      <path d={down(1051, 799)} />
      <path d={up(1114, 795)} />
      <path d={down(1335, 799)} />
      <path d={up(1397, 795)} />
      <path d="M1182 880h70v-8l16 15-16 15v-8h-70z" />
      <path d="M1268 911h-69v-8l-17 16 17 15v-8h69z" />
      <path d="M1524 885h-33v-13l-25 25 25 24v-12h33z" />
      <rect x="1280" y="865" width="182" height="73" rx="9" fill="none" stroke="#5b86b8" strokeWidth="4" strokeDasharray="15 9" />
    </svg>
  );
}

function Diagram() {
  return (
    <figure className="relative h-[610px] w-[675px] shrink-0 border border-[#a5a6a4] text-[#222]">
      <Arrows />
      <div className={NODE + "left-[165px] top-[9px] w-[102px]"}>Class files</div>
      <div className={NODE + RED + "left-[331px] top-[37px] h-[70px] w-[187px]"}><span>类装载器子系统</span><span>Class loader</span></div>
      <div className="absolute left-[26px] top-[195px] h-[242px] w-[586px] rounded-[20px] bg-[#a2b85c] shadow-[0_4px_0_3px_#fff,0_6px_2px_4px_#e4e4e4]" />
      <div className={NODE + "left-[26px] top-[206px] w-[626px]"}>运行时数据区(Runtime Data Area)</div>
      <div className={NODE + PEACH + "left-[41px] top-[241px] h-[76px] w-[145px]"}><span>方法区</span><span>Method Area</span></div>
      <div className={NODE + GRAY + "left-[202px] top-[241px] h-[76px] w-[147px]"}><span>Java栈</span><span>Java stack</span></div>
      <div className={NODE + GRAY + "left-[368px] top-[241px] h-[76px] w-[233px]"}><span>本地方法栈</span><span>Native Method Stack</span></div>
      <div className={NODE + PEACH + "left-[41px] top-[331px] h-[88px] w-[145px]"}><span>堆</span><span>heap</span></div>
      <div className={NODE + GRAY + "left-[202px] top-[331px] h-[88px] w-[399px]"}><span>程序计数器</span><span>Program Counter Register</span></div>
      <div className={NODE + RED + "left-[29px] top-[517px] h-[82px] w-[169px]"}><span>执行引擎</span><span>Execution</span><span>Engine</span></div>
      <div className={NODE + "left-[301px] top-[517px] h-[76px] w-[186px]"}><span>本地方法接口</span><span>Native Interface</span></div>
      <div className={NODE + "left-[562px] top-[542px] w-[95px]"}>本地方法库</div>

      <span className="absolute -top-[30px] left-[336px] h-[30px] w-px bg-[#a5a6a4]" />
      <Svg w={36} h={34} className="absolute -top-[61px] left-[321px] text-[#9a9a9a]">
        <path d="M23 26a11 11 0 1 1 4-10" strokeWidth="8" />
        <path d="M23 26a11 11 0 1 1 4-10" stroke="#fefefe" strokeWidth="4" />
        <path d="M18 15h15l-8 9z" fill="#fefefe" strokeWidth="2" />
      </Svg>
      <Handle pos="-left-2 -top-2" />
      <Handle pos="left-[329px] -top-2" />
      <Handle pos="-right-2 -top-2" />
      <Handle pos="-left-2 top-[297px]" />
      <Handle pos="-right-2 top-[297px]" />
      <Handle pos="-left-2 -bottom-2" />
      <Handle pos="left-[329px] -bottom-2" />
      <Handle pos="-right-2 -bottom-2" />

      <span className="absolute left-[347px] top-[291px] size-16 rounded-full bg-[#fff200] mix-blend-multiply" />
      <Svg w={26} h={40} className="absolute left-[368px] top-[311px]">
        <g stroke="#fff" strokeWidth="1" fill="#111">
          <path d="M12 0l4 5h-3v5h-2V5H8zM1 12l5-4v3h5v2H6v3zM23 12l-5-4v3h-4v2h4v3z" />
          <path d="M12 13v20l4.500-4.500L20 37l3-1.500-3.500-8H25z" fill="#fff" stroke="#111" strokeWidth="1.300" />
        </g>
      </Svg>
    </figure>
  );
}

const BULLETS = [
  "HotSpot VM是目前市面上高性能虚拟机的代表作之一。",
  "它采用解释器与即时编译器并存的架构。",
  "在今天，Java程序的运行性能早已脱胎换骨，已经达到了可以和C/C++程序一较高下的地步。",
];

function Slide() {
  return (
    <article className="flex aspect-[1234/694] w-full flex-col bg-[#fefefe] outline-1 outline-solid outline-[#cfd0ce]">
      <div className="flex h-[58px] shrink-0 items-center border-b-4 border-[#0c7f71] pl-[5px]">
        <Diamonds />
        <h2 className="flex-1 pl-[30px] pt-1 text-[35px] font-bold leading-10 text-black">JVM的整体结构</h2>
        <span className="mr-[25px] flex items-center gap-[3px] text-[32px] font-bold leading-9 text-[#0e7b6d]">
          <ULogo w={34} h={34} />
          尚硅谷
        </span>
      </div>
      <div className="flex pr-[13px] pt-[10px]">
        <ul className="flex flex-1 flex-col gap-10 pl-[98px] pr-7 pt-[68px] font-['Liberation_Mono','Noto_Sans_CJK_SC',monospace] text-[31px] font-light leading-9 text-[#2c2c2c]">
          {BULLETS.map((b) => (
            <li key={b} className="relative before:absolute before:-left-[38px] before:top-[13px] before:size-2 before:rounded-full before:bg-black">{b}</li>
          ))}
        </ul>
        <Diagram />
      </div>
    </article>
  );
}

function ImeBar() {
  return (
    <div className="absolute bottom-0.5 right-[7px] flex h-7 w-[195px] items-center justify-between border border-[#b9cbe0] bg-[#f4f9fe] pl-[3px] pr-2.5 text-[#4a8fd0]">
      <ULogo w={24} h={24} />
      <span className="text-[20px] font-bold leading-6">中</span>
      <Svg w={18} h={18}><path d="M11 1c8 6 5 16-4 16-3 0-5-1-6-3 8 0 11-6 10-13z" fill="currentColor" stroke="none" /></Svg>
      <Svg w={14} h={18}><circle cx="4" cy="5" r="2.500" /><path d="M11 11v2c0 2-1 3-2 4" strokeWidth="2.500" /></Svg>
      <Svg w={22} h={16}><rect x="1" y="1" width="20" height="14" rx="1" fill="#fff" strokeWidth="2" /><path d="M4 5h14M4 8h14M6 11.500h10" strokeWidth="2" strokeDasharray="2 1" /></Svg>
      <Svg w={14} h={18}><circle cx="7" cy="4.500" r="4" fill="currentColor" stroke="none" /><path d="M0 17v-5c0-4 14-4 14 0v5z" fill="currentColor" stroke="none" /></Svg>
      <Svg w={18} h={18}><path d="M2 16l8-8" strokeWidth="4" /><path d="M16 4l-3 2-2-2 2-3c-5-1-7 5-4 8s9 1 8-5z" fill="currentColor" stroke="none" /></Svg>
    </div>
  );
}

function Workspace() {
  return (
    <main className="flex min-h-0 flex-1 bg-[#e7e8e6]">
      <Thumbnails />
      <div className="relative flex flex-1">
        <div className="flex-1 px-[108px] pt-[21px]"><Slide /></div>
        <div className="mr-0.5 mt-[3px] flex w-[19px] flex-col">
          <ScrollBtn label="上一屏" up />
          <div className="grow-[347]" />
          <div className="h-[22px] border border-[#b5b6b4] bg-white" />
          <div className="grow-[251]" />
          <ScrollBtn label="下一屏" />
          <div className="mb-10 mt-1.5 flex flex-col items-center gap-2 text-[#777]">
            <button type="button" aria-label="上一张幻灯片"><Svg w={10} h={12}><path d="M0 6l5-5 5 5zM0 12l5-5 5 5z" fill="currentColor" stroke="none" /></Svg></button>
            <button type="button" aria-label="下一张幻灯片"><Svg w={10} h={12}><path d="M0 0l5 5 5-5zM0 6l5 5 5-5z" fill="currentColor" stroke="none" /></Svg></button>
          </div>
        </div>
        <ImeBar />
      </div>
    </main>
  );
}

/* ---------- status bar ---------- */

function StatusBar() {
  return (
    <footer className="flex h-[29px] shrink-0 items-center border-t border-[#c6c7c5] bg-[#f0f1ef] pb-px pl-2 text-base leading-5 text-[#666]">
      <span className="w-[214px]">幻灯片 第 46 张 , 共 79 张</span>
      <button type="button" aria-label="拼写检查"><Svg><path d="M10 4C8 1 4 2 1 2v14c3 0 7-1 9 2 1-2 3-2 4-2M10 4v14M10 4c2-3 5-2 8-2v3M12 7l6 7M18 7l-6 7" /></Svg></button>
      <button type="button" className="ml-[22px]">中文(中国)</button>
      <div className="ml-auto flex items-center">
        <button type="button" className="flex items-center gap-1"><Svg w={18} h={18}><path d="M1 9h15M1 13h15M4 17h9" /><path d="M5 6h8L9 1z" fill="currentColor" stroke="none" /></Svg>备注</button>
        <button type="button" className="ml-[26px] flex items-center gap-1"><Svg w={18} h={18}><path d="M1 2h15v10h-6l-4 5v-5H1z" fill="currentColor" /></Svg>批注</button>
        <button type="button" aria-label="普通视图" className="ml-[25px] flex h-7 w-[50px] items-center justify-center bg-[#cfd0ce]"><Svg><path d="M1 2h18v16H1zM5 2v16M5 13h14M9 5h7v5H9zM1 7h4" /></Svg></button>
        <button type="button" aria-label="幻灯片浏览" className="ml-[15px]"><Svg><path d="M1 1h7v6H1zM12 1h7v6h-7zM1 12h7v6H1zM12 12h7v6h-7z" /></Svg></button>
        <button type="button" aria-label="阅读视图" className="ml-[29px]"><Svg><path d="M10 3C8 1 4 1 2 2v14c3-1 6-1 8 2 2-3 5-3 8-2V2c-2-1-6-1-8 1zM10 3v15M4 5h4M4 8h4M4 11h4M12 5h4M12 8h4M12 11h4" strokeWidth="1.300" /></Svg></button>
        <button type="button" aria-label="幻灯片放映" className="ml-[30px]"><Svg><path d="M1 2h18M3 2v8h14V2M10 10v7M6 18h8" /></Svg></button>
        <button type="button" aria-label="缩小" className="ml-[21px]"><Svg w={8} h={8}><path d="M0 4h8" strokeWidth="3" /></Svg></button>
        <input
          type="range"
          aria-label="显示比例"
          min="10"
          max="184"
          defaultValue="96"
          className="ml-1.5 h-4 w-[131px] appearance-none bg-[linear-gradient(#b5b6b4,#b5b6b4)] bg-[length:100%_1px] bg-center bg-no-repeat [&::-webkit-slider-thumb]:h-4 [&::-webkit-slider-thumb]:w-[5px] [&::-webkit-slider-thumb]:appearance-none [&::-webkit-slider-thumb]:bg-[#6a6a6a]"
        />
        <button type="button" aria-label="放大" className="ml-[5px]"><Svg w={12} h={12}><path d="M0 6h12M6 0v12" strokeWidth="2.500" /></Svg></button>
        <button type="button" className="ml-[18px] w-[50px] text-left">98%</button>
        <button type="button" aria-label="适应窗口" className="mr-2"><Svg><path d="M1 1h18v18H1zM10 3v5M10 12v5M3 10h5M12 10h5M8 5l2-2 2 2M8 15l2 2 2-2M5 8l-2 2 2 2M15 8l2 2-2 2" strokeWidth="1.200" /></Svg></button>
      </div>
    </footer>
  );
}

/* ---------- taskbar ---------- */

function StartOrb() {
  return (
    <button type="button" aria-label="开始" className="-mt-[7px] ml-3 h-12 shrink-0">
      <Svg w={48} h={48}>
        <defs>
          <radialGradient id="orb" cx=".5" cy=".95" r=".9"><stop offset="0" stopColor="#2fd0ff" /><stop offset=".45" stopColor="#1c6fae" /><stop offset="1" stopColor="#7fa6c6" /></radialGradient>
        </defs>
        <circle cx="24" cy="24" r="23" fill="url(#orb)" stroke="#7d9cb8" />
        <g stroke="none">
          <path d="M14 11c4-2 7-1 10 1l-2 11c-3-2-6-2-10-1z" fill="#ea6329" />
          <path d="M26 13c4 2 7 2 11 1l-2 10c-4 2-7 1-11 0z" fill="#96c13d" />
          <path d="M11 24c4-1 7-1 10 1l-2 10c-3-2-6-2-10 0z" fill="#4e9fe0" />
          <path d="M23 26c4 2 7 2 11 1l-2 10c-4 1-7 1-11-1z" fill="#fbc132" />
        </g>
      </Svg>
    </button>
  );
}

const TASK = "flex h-[38px] w-[208px] items-center gap-2 rounded-[3px] border pl-2.5 text-left text-base leading-5 text-[#eef3f8] ";

function Taskbar() {
  return (
    <footer className="relative flex h-[41px] shrink-0 items-center border-t border-[#5f7f9d] bg-linear-to-r from-[#0b2647] via-[#0e3563] to-[#0b2444] pb-px text-base leading-5 text-[#eef3f8]">
      <StartOrb />
      <div className="ml-9 flex gap-10">
        <button type="button" aria-label="G"><Svg w={22} h={24}><path d="M20 0l-2 6h-6c-9 0-9 15 0 15 6 0 7-4 7-8h-7" stroke="#d63a17" strokeWidth="4" /></Svg></button>
        <button type="button" aria-label="相册">
          <Svg w={20} h={22}><g strokeWidth="7"><path d="M10 4.500a6.500 6.500 0 0 1 6 4" stroke="#e8447c" /><path d="M16 8.500a6.500 6.500 0 0 1-2 7.500" stroke="#f59c2f" /><path d="M14 16a6.500 6.500 0 0 1-8 0" stroke="#e9e13a" /><path d="M6 16a6.500 6.500 0 0 1-2-7" stroke="#3ec24b" /><path d="M4 9a6.500 6.500 0 0 1 6-4.500" stroke="#8b62d8" /></g><circle cx="10" cy="11" r="3" fill="#fff" stroke="none" /></Svg>
        </button>
        <button type="button" aria-label="Chrome">
          <Svg w={20} h={22}><g stroke="none"><circle cx="10" cy="11" r="10" fill="#f7cf3c" /><path d="M1 7a10 10 0 0 1 18 0H10l-4 6z" fill="#dd4b3a" /><path d="M1 6a10 10 0 0 0 8 15l4-8-7 0z" fill="#4aa552" /><circle cx="10" cy="11" r="5" fill="#fff" /><circle cx="10" cy="11" r="4" fill="#4b8bf0" /></g></Svg>
        </button>
        <button type="button" aria-label="Firefox">
          <Svg w={20} h={22}><g stroke="none"><circle cx="10" cy="11" r="10" fill="#e2661c" /><circle cx="11" cy="9" r="7" fill="#245a96" /><path d="M1 4c2 1 4 2 6 2-1 3 1 5 4 6-3 4-7 2-8-1-1 8 10 11 15 2 0 5-4 8-9 8C1 20-2 11 1 4z" fill="#f28a26" /></g></Svg>
        </button>
        <button type="button" aria-label="Internet Explorer">
          <Svg w={22} h={24}><path d="M4 13h14c0-10-14-10-14 0s11 9 13 3" stroke="#4aa8ec" strokeWidth="4" /><path d="M2 22c-4-4 7-20 17-20 3 0 2 3 1 5" stroke="#f4c534" strokeWidth="2" /></Svg>
        </button>
      </div>
      <div className="ml-5 flex gap-1">
        <button type="button" className={TASK + "border-[#8ba0b8] bg-linear-to-b from-[#6d829d] to-[#2a4a70]"}>
          <Svg w={20} h={24}><path d="M2 2l8-1v21l-8 1zM10 3h6v18h-6z" fill="#f3dd8a" stroke="#c9a945" strokeWidth="1" /><path d="M17 14v8" stroke="#6fb2e8" /></Svg>
          01_课件
        </button>
        <button type="button" className={TASK + "border-[#dfe5ec] bg-linear-to-b from-[#a4afbd] to-[#8492a6]"}>
          <Svg w={22} h={24}><path d="M0 3l13-3v24L0 21z" fill="#d6502a" stroke="none" /><path d="M13 4h8v16h-8z" fill="#fff" stroke="#d6502a" strokeWidth="1" /><path d="M14 9h5v3h-5M14 16h5" stroke="#d6502a" /><path d="M4 17V7h3c3 0 3 5 0 5H4" stroke="#fff" strokeWidth="2" /></Svg>
          <span className="-ml-1 whitespace-nowrap">尚硅谷_宋红康_01_J...</span>
        </button>
        <button type="button" className={TASK + "border-[#8ba0b8] bg-linear-to-b from-[#5d7592] to-[#27476e]"}>
          <Svg w={20} h={24}><path d="M5 11v11" stroke="#111" strokeWidth="4" /><path d="M5 10v12" stroke="#ccc" /><circle cx="5" cy="6" r="4" fill="#bbb" stroke="#333" strokeWidth="2" /><path d="M10 8l9-2v10l-9 1z" fill="#e02512" stroke="none" /></Svg>
          Recording...
        </button>
      </div>
      <div className="ml-auto flex items-center">
        <span className="mr-2">api</span>
        <button type="button" className="mr-[29px] flex items-center gap-[5px]">
          <Svg w={21} h={24}><path d="M1 6h9l3 3v14H1z" fill="#fff" stroke="#444" strokeWidth="1" /><path d="M3 12h7M3 15h7M3 18h7" stroke="#666" /><path d="M9 6c0-6 10-6 10 0 0 4-5 4-5 9M14 18v4" stroke="#333" strokeWidth="5" /><path d="M9 6c0-6 10-6 10 0 0 4-5 4-5 9M14 18v4" stroke="#f5e32b" strokeWidth="3.500" /></Svg>
          Ajax.chm
        </button>
        <button type="button" aria-label="更多" className="mb-3 mr-3"><Svg w={10} h={8}><path d="M1 1l3 3-3 3M6 1l3 3-3 3" strokeWidth="1.800" /></Svg></button>
        <button type="button" aria-label="搜狗输入法" className="mb-1.5"><Svg w={22} h={24}><path d="M1 3l18-3 2 20-16 3z" fill="#f0532a" stroke="none" /><path d="M15 7c-4-2-8-1-8 2s8 1 8 5-6 4-9 2" stroke="#fff" strokeWidth="2.500" /></Svg></button>
        <button type="button" aria-label="显示隐藏的图标" className="ml-5"><Svg w={10} h={6}><path d="M0 6h10L5 0z" fill="currentColor" stroke="none" /></Svg></button>
        <button type="button" aria-label="音量" className="ml-5"><Svg w={17} h={22}><path d="M1 7h3l6-6v20l-6-6H1z" fill="#fff" stroke="none" /><path d="M13 7c2 2 2 6 0 8" strokeWidth="1.800" /></Svg></button>
        <button type="button" aria-label="用户" className="ml-3"><Svg w={21} h={22}><g stroke="none"><circle cx="14" cy="6" r="5" fill="#bfe0f7" /><path d="M8 21c0-12 12-12 12-2-3 3-8 3-12 2z" fill="#4ea3e0" /><circle cx="7" cy="9" r="6.500" fill="#f7d774" /><path d="M2 14h9l-4 4z" fill="#d9a93a" /></g></Svg></button>
        <button type="button" aria-label="安全卫士" className="ml-[10px]"><Svg w={22} h={22}><circle cx="11" cy="11" r="9.500" fill="#f3e02a" stroke="#efc81e" strokeWidth="3" /><path d="M11 1.500A9.500 9.500 0 0 1 20 8M11 20.500A9.500 9.500 0 0 1 2 14" stroke="#2d9a3a" strokeWidth="3" /><path d="M11 6v10M6 11h10" stroke="#178a2c" strokeWidth="2.500" /></Svg></button>
        <button type="button" aria-label="网络" className="ml-3"><Svg w={20} h={22}><path d="M7 5h12v11H7zM9 20h8M13 16v4" strokeWidth="2" /><path d="M0 3h6v5H0z" fill="#fff" stroke="none" /><path d="M3 8v13M1 0v3M5 0v3M1 21h4" strokeWidth="1.800" /></Svg></button>
        <button type="button" aria-label="电源" className="ml-[10px]"><Svg w={20} h={22}><path d="M1 4h9v17H1zM4 2h4" strokeWidth="1.800" /><path d="M9 7h10v5l-5 4-5-4z" fill="#fff" stroke="none" /><path d="M12 2v6M16 2v6M14 15v5" strokeWidth="1.800" /></Svg></button>
        <button type="button" aria-label="远程" className="ml-[10px]"><Svg w={22} h={24}><path d="M2 1h18v15H2z" fill="#999" stroke="#777" /><path d="M2 18h8v5H2zM13 18h8v5h-8z" fill="#555" stroke="#2233aa" /><circle cx="11" cy="8.500" r="5.500" fill="#d8d8d8" stroke="#e1251b" strokeWidth="2.500" /><path d="M7 5l8 7" stroke="#e1251b" strokeWidth="2.500" /></Svg></button>
        <time className="ml-6">上午 10:28</time>
        <button type="button" aria-label="显示桌面" className="ml-[17px] mr-[3px] h-10 w-[17px] border border-[#5a708c] bg-linear-to-b from-[#5d7089] to-[#1a3252]" />
      </div>
    </footer>
  );
}

export default function App() {
  return (
    <div lang="zh-CN" className={"flex h-screen flex-col bg-black py-14 " + UI}>
      <div className="flex min-h-0 flex-1 flex-col border-l-[3px] border-[#63bfa6]">
        <Header />
        <Ribbon />
        <Workspace />
        <StatusBar />
      </div>
      <Taskbar />
    </div>
  );
}
